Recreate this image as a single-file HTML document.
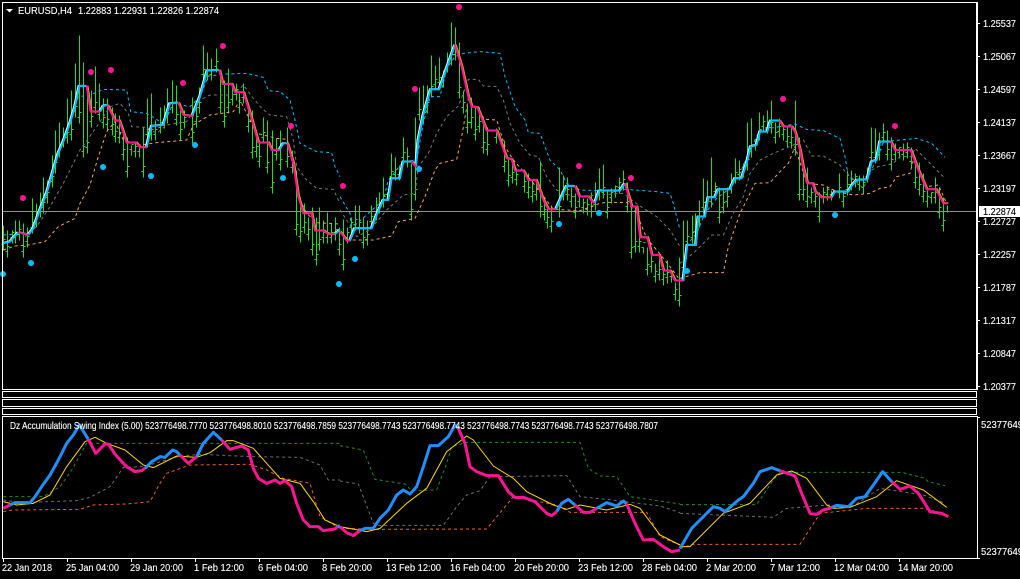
<!DOCTYPE html>
<html><head><meta charset="utf-8"><title>EURUSD,H4</title>
<style>
html,body{margin:0;padding:0;background:#000;width:1020px;height:579px;overflow:hidden}
svg{display:block;position:absolute;left:0;top:0}
text{font-family:"Liberation Sans",sans-serif;font-size:10.2px;fill:#fff;stroke:#fff;stroke-width:.12px}
defs path,.n{fill:none;vector-effect:non-scaling-stroke;stroke-linejoin:round}
.p{stroke:#ff1493;stroke-width:2}.b{stroke:#00bfff;stroke-width:2}
.p3{stroke:#ff1493;stroke-width:3}.b3{stroke:#1e90ff;stroke-width:3}
.w{stroke:#fff;stroke-width:1.6}.o{stroke:#daa520;stroke-width:1.6}
.db{stroke:#00bfff;stroke-dasharray:3 3}.dg{stroke:#777;stroke-dasharray:3 3}.dr{stroke:#f4a460;stroke-dasharray:3 3}
.y{stroke:#ffd700;stroke-width:1}.g2{stroke:#228b22;stroke-dasharray:3 3}.g3{stroke:#6e6e6e;stroke-dasharray:3 3}.r3{stroke:#e8641e;stroke-dasharray:3 3}
</style></head><body>
<svg width="1020" height="579" viewBox="0 0 1020 579" xmlns="http://www.w3.org/2000/svg">
<rect width="1020" height="579" fill="#000"/>
<!-- price line -->
<rect x="3" y="211" width="974" height="1" fill="#8f8f8f"/>
<!-- bars -->
<g transform="translate(.5,.5)" shape-rendering="crispEdges"><path fill="none" stroke="#1fdf1f" stroke-width="1" d="M3 225V250m-2-6h2m0-5h2M7 230V257m-2-6h2m0-5h2M12 230V243m-2-6h2m0-5h2M15 220V243m-2-6h2m0-5h2M19 220V240m-2-6h2m0-5h2M23 223V257m-2-6h2m0-5h2M27 227V247m-2-6h2m0-5h2M32 198V233m-2-6h2m0-5h2M36 203V227m-2-6h2m0-5h2M40 192V217m-2-6h2m0-5h2M43 177V213m-2-6h2m0-5h2M47 180V203m-2-6h2m0-5h2M52 155V187m-2-6h2m0-5h2M55 130V173m-2-6h2m0-5h2M59 122V157m-2-6h2m0-5h2M63 127V147m-2-6h2m0-5h2M67 98V143m-2-6h2m0-5h2M71 90V140m-2-6h2m0-5h2M75 63V117m-2-6h2m0-5h2M79 35V123m-2-6h2m0-5h2M83 62V157m-2-6h2m0-5h2M87 87V153m-2-6h2m0-5h2M91 90V127m-2-6h2m0-5h2M95 66V113m-2-6h2m0-5h2M99 83V120m-2-6h2m0-5h2M103 98V128m-2-6h2m0-5h2M107 98V130m-2-6h2m0-5h2M112 107V135m-2-6h2m0-5h2M115 113V142m-2-6h2m0-5h2M119 115V143m-2-6h2m0-5h2M123 127V160m-2-6h2m0-5h2M127 137V177m-2-6h2m0-5h2M131 145V155m-2-6h2m0-5h2M135 143V157m-2-6h2m0-5h2M139 147V157m-2-6h2m0-5h2M143 127V177m-2-6h2m0-5h2M147 98V140m-2-6h2m0-5h2M151 93V140m-2-6h2m0-5h2M155 120V140m-2-6h2m0-5h2M160 107V133m-2-6h2m0-5h2M164 105V128m-2-6h2m0-5h2M167 88V123m-2-6h2m0-5h2M172 80V113m-2-6h2m0-5h2M176 85V125m-2-6h2m0-5h2M180 110V140m-2-6h2m0-5h2M184 110V128m-2-6h2m0-5h2M192 97V143m-2-6h2m0-5h2M196 100V127m-2-6h2m0-5h2M199 87V113m-2-6h2m0-5h2M203 45V80m-2-6h2m0-5h2M207 52V80m-2-6h2m0-5h2M211 58V80m-2-6h2m0-5h2M216 48V72m-2-6h2m0-5h2M220 70V113m-2-6h2m0-5h2M224 80V127m-2-6h2m0-5h2M228 68V113m-2-6h2m0-5h2M232 83V105m-2-6h2m0-5h2M236 83V100m-2-6h2m0-5h2M239 93V113m-2-6h2m0-5h2M243 83V103m-2-6h2m0-5h2M248 103V132m-2-6h2m0-5h2M252 110V158m-2-6h2m0-5h2M256 132V157m-2-6h2m0-5h2M259 140V167m-2-6h2m0-5h2M263 117V143m-2-6h2m0-5h2M267 120V173m-2-6h2m0-5h2M272 130V193m-2-6h2m0-5h2M276 138V160m-2-6h2m0-5h2M280 130V170m-2-6h2m0-5h2M287 127V167m-2-6h2m0-5h2M292 150V173m-2-6h2m0-5h2M296 170V235m-2-6h2m0-5h2M300 197V242m-2-6h2m0-5h2M304 203V233m-2-6h2m0-5h2M308 217V240m-2-6h2m0-5h2M312 207V255m-2-6h2m0-5h2M316 217V265m-2-6h2m0-5h2M319 207V250m-2-6h2m0-5h2M323 220V243m-2-6h2m0-5h2M327 212V243m-2-6h2m0-5h2M331 223V243m-2-6h2m0-5h2M335 217V240m-2-6h2m0-5h2M339 227V255m-2-6h2m0-5h2M343 219V270m-2-6h2m0-5h2M347 227V243m-2-6h2m0-5h2M351 217V233m-2-6h2m0-5h2M355 205V230m-2-6h2m0-5h2M359 205V233m-2-6h2m0-5h2M363 217V248m-2-6h2m0-5h2M367 220V245m-2-6h2m0-5h2M371 205V227m-2-6h2m0-5h2M376 197V220m-2-6h2m0-5h2M379 192V213m-2-6h2m0-5h2M383 177V207m-2-6h2m0-5h2M387 192V200m-2-6h2m0-5h2M391 153V182m-2-6h2m0-5h2M395 157V180m-2-6h2m0-5h2M399 165V180m-2-6h2m0-5h2M403 137V163m-2-6h2m0-5h2M407 147V167m-2-6h2m0-5h2M411 163V220m-2-6h2m0-5h2M415 117V200m-2-6h2m0-5h2M419 87V120m-2-6h2m0-5h2M423 85V123m-2-6h2m0-5h2M427 85V113m-2-6h2m0-5h2M431 55V97m-2-6h2m0-5h2M435 65V90m-2-6h2m0-5h2M439 57V88m-2-6h2m0-5h2M443 70V87m-2-6h2m0-5h2M447 52V72m-2-6h2m0-5h2M451 22V65m-2-6h2m0-5h2M455 27V60m-2-6h2m0-5h2M459 42V98m-2-6h2m0-5h2M463 90V113m-2-6h2m0-5h2M467 105V133m-2-6h2m0-5h2M471 97V128m-2-6h2m0-5h2M475 107V140m-2-6h2m0-5h2M479 107V132m-2-6h2m0-5h2M483 123V153m-2-6h2m0-5h2M487 127V155m-2-6h2m0-5h2M496 128V143m-2-6h2m0-5h2M504 140V172m-2-6h2m0-5h2M508 157V186m-2-6h2m0-5h2M512 160V183m-2-6h2m0-5h2M516 168V185m-2-6h2m0-5h2M524 173V192m-2-6h2m0-5h2M528 173V198m-2-6h2m0-5h2M532 180V202m-2-6h2m0-5h2M536 180V200m-2-6h2m0-5h2M540 161V217m-2-6h2m0-5h2M544 197V220m-2-6h2m0-5h2M547 208V228m-2-6h2m0-5h2M551 205V232m-2-6h2m0-5h2M559 167V217m-2-6h2m0-5h2M563 175V200m-2-6h2m0-5h2M567 177V200m-2-6h2m0-5h2M571 187V207m-2-6h2m0-5h2M575 193V218m-2-6h2m0-5h2M579 193V207m-2-6h2m0-5h2M583 198V213m-2-6h2m0-5h2M587 198V215m-2-6h2m0-5h2M591 192V217m-2-6h2m0-5h2M595 182V210m-2-6h2m0-5h2M599 168V200m-2-6h2m0-5h2M603 164V198m-2-6h2m0-5h2M607 190V218m-2-6h2m0-5h2M611 188V203m-2-6h2m0-5h2M615 185V197m-2-6h2m0-5h2M619 177V193m-2-6h2m0-5h2M623 170V190m-2-6h2m0-5h2M627 182V212m-2-6h2m0-5h2M631 200V258m-2-6h2m0-5h2M635 207V252m-2-6h2m0-5h2M639 235V252m-2-6h2m0-5h2M643 247V253m-2-6h2m0-5h2M647 247V275m-2-6h2m0-5h2M651 255V272m-2-6h2m0-5h2M655 263V282m-2-6h2m0-5h2M659 257V280m-2-6h2m0-5h2M663 267V285m-2-6h2m0-5h2M667 260V283m-2-6h2m0-5h2M671 270V282m-2-6h2m0-5h2M675 282V300m-2-6h2m0-5h2M679 257V306m-2-6h2m0-5h2M683 220V273m-2-6h2m0-5h2M687 220V247m-2-6h2m0-5h2M692 215V243m-2-6h2m0-5h2M695 213V237m-2-6h2m0-5h2M699 200V227m-2-6h2m0-5h2M703 178V213m-2-6h2m0-5h2M707 180V207m-2-6h2m0-5h2M711 157V207m-2-6h2m0-5h2M715 182V197m-2-6h2m0-5h2M719 187V223m-2-6h2m0-5h2M723 190V213m-2-6h2m0-5h2M727 187V207m-2-6h2m0-5h2M731 173V193m-2-6h2m0-5h2M735 158V183m-2-6h2m0-5h2M739 160V180m-2-6h2m0-5h2M743 163V177m-2-6h2m0-5h2M747 122V170m-2-6h2m0-5h2M751 118V157m-2-6h2m0-5h2M755 140V150m-2-6h2m0-5h2M759 112V140m-2-6h2m0-5h2M763 115V132m-2-6h2m0-5h2M767 110V133m-2-6h2m0-5h2M771 100V133m-2-6h2m0-5h2M775 122V143m-2-6h2m0-5h2M779 118V137m-2-6h2m0-5h2M783 125V140m-2-6h2m0-5h2M787 127V147m-2-6h2m0-5h2M791 128V148m-2-6h2m0-5h2M795 100V155m-2-6h2m0-5h2M799 137V200m-2-6h2m0-5h2M803 163V200m-2-6h2m0-5h2M807 167V207m-2-6h2m0-5h2M811 187V203m-2-6h2m0-5h2M815 187V207m-2-6h2m0-5h2M819 192V222m-2-6h2m0-5h2M823 187V203m-2-6h2m0-5h2M827 187V200m-2-6h2m0-5h2M831 190V200m-2-6h2m0-5h2M839 173V198m-2-6h2m0-5h2M843 190V207m-2-6h2m0-5h2M847 170V195m-2-6h2m0-5h2M851 170V190m-2-6h2m0-5h2M855 173V187m-2-6h2m0-5h2M859 175V190m-2-6h2m0-5h2M863 175V193m-2-6h2m0-5h2M867 167V182m-2-6h2m0-5h2M871 127V163m-2-6h2m0-5h2M875 128V163m-2-6h2m0-5h2M879 132V160m-2-6h2m0-5h2M883 123V143m-2-6h2m0-5h2M887 130V160m-2-6h2m0-5h2M891 137V170m-2-6h2m0-5h2M895 143V160m-2-6h2m0-5h2M899 147V158m-2-6h2m0-5h2M903 143V160m-2-6h2m0-5h2M907 142V158m-2-6h2m0-5h2M911 147V167m-2-6h2m0-5h2M915 157V188m-2-6h2m0-5h2M919 162V195m-2-6h2m0-5h2M923 173V202m-2-6h2m0-5h2M927 190V207m-2-6h2m0-5h2M931 192V203m-2-6h2m0-5h2M935 177V203m-2-6h2m0-5h2M939 187V218m-2-6h2m0-5h2M943 197V231m-2-6h2m0-5h2M947 205V212"/></g>
<defs>
<path id="b1" vector-effect="non-scaling-stroke" d="M9 730L30 725 55 697M85 705L100 685 120 630 140 580 160 510 175 460 190 425 210 370 225 320 238 258 260 258M300 335L310 318 322 315M440 442L455 378 490 375 510 310 535 308M578 345L600 290 622 212 658 210M838 450L850 430 862 430M1005 702L1020 690"/>
<path id="p1" vector-effect="non-scaling-stroke" d="M55 697L85 705M260 258L272 335 300 335M322 315L345 362 358 362 380 428 408 428 420 442 440 442M535 308L550 345 578 348M658 210L668 252 695 252 705 277 730 277 750 340 775 428 805 428 815 450 838 450M862 430L880 490 895 590 910 640 935 640 945 692 970 692 985 702 1005 702"/>
<path id="b2" vector-effect="non-scaling-stroke" d="M30 722L45 685 95 685 110 645 130 600 145 600 155 535 180 535 190 485 215 485M228 500L235 420 250 345 272 268 298 268 308 240 320 205 345 135M648 628L665 590 680 558 705 558M765 608L778 572 840 572 855 550"/>
<path id="p2" vector-effect="non-scaling-stroke" d="M0 695L20 722 30 722M215 485L228 500M345 135L365 200 385 290 395 320 412 322 440 392 470 392 500 475 515 478 525 512 550 512 565 540 588 540 610 600 625 628 648 628M705 558L718 590 745 590 760 608 765 608M855 550L875 620 890 620 900 712 922 712 935 765 958 765 970 812 990 812 1005 842 1020 842"/>
<path id="b3" vector-effect="non-scaling-stroke" d="M10 842L22 735 48 735 55 650 75 650 85 592 105 592 115 568 150 568 165 535 185 535 200 490 212 440 230 435 240 395 262 395 272 362 298 362M455 592L465 575 505 575 515 558 530 540 562 538 575 485 590 480 600 425 632 425"/>
<path id="p3" vector-effect="non-scaling-stroke" d="M0 842L10 842M298 362L310 380 335 380 345 395 360 450 370 505 382 550 398 550 405 575 425 592 455 592M632 425L645 450 692 450 715 510 740 568 768 568 790 610 802 610"/>
</defs>
<!-- main chart tile 1 -->
<g transform="scale(.33333)">
<path class="n db" d="M10 705L85 700 100 675 130 590 160 520 180 440 215 350 235 290 270 285 310 268 380 270 392 335 440 340 465 355 490 372 520 310 570 320 600 290 625 228 680 222 740 220 790 232 805 272 840 275 870 300 885 360 900 430 950 455 995 458 1005 500 1020 530"/>
<path class="n dg" d="M75 710L110 680 150 620 190 550 240 450 290 380 330 320 360 310 385 340 395 380 440 382 470 400 500 375 560 365 600 300 630 285 700 285 730 255 760 295 785 325 810 345 860 350 880 420 890 500 920 540 950 565 1000 568 1020 610"/>
<path class="n dr" d="M10 750L45 738 85 735 135 725 175 680 225 655 240 610 270 555 295 470 320 395 345 365 370 420 420 435 470 428 560 420 580 375 630 345 700 335 720 300 770 400 830 415 862 418 900 600 920 640 950 668 1020 672"/>
<use href="#b1" class="w" transform="translate(-3,-1)"/><use href="#p1" class="o" transform="translate(3,-1)"/>
<use href="#b1" class="b"/><use href="#p1" class="p"/>
</g>
<g transform="translate(340,0) scale(.33333)">
<path class="n db" d="M0 590L30 640 35 700 40 680 130 600 145 540 190 485 230 480 250 370 270 290 300 290 320 205 345 170 370 160 420 155 480 160 495 230 525 320 555 360 565 398 600 400 630 480 660 510 680 550 720 570 780 572 860 568 950 575 990 580 1000 610 1020 690"/>
<path class="n dg" d="M0 630L20 660 50 710 90 690 140 630 190 585 225 580 235 500 265 460 290 400 320 350 355 318 370 280 385 238 415 238 430 258 470 260 490 300 510 370 540 430 570 465 595 470 620 530 650 570 700 590 850 580 895 615 950 650 990 690 1020 740"/>
<path class="n dr" d="M20 720L100 720 155 708 175 665 225 655 255 590 285 510 300 490 350 478 365 410 385 295 420 340 435 358 470 360 495 440 520 480 560 525 600 575 640 628 720 632 780 610 800 607 860 607 890 640 920 715 950 750 990 800 1020 840"/>
<use href="#b2" class="w" transform="translate(-3,-1)"/><use href="#p2" class="o" transform="translate(3,-1)"/>
<use href="#b2" class="b"/><use href="#p2" class="p"/>
</g>
<g transform="translate(680,0) scale(.33333)">
<path class="n db" d="M10 790L20 735 50 700 75 640 110 595 150 565 180 520 210 450 240 390 345 372 380 388 430 392 480 415 495 470 505 530 530 545 560 535 590 480 610 425 710 415 755 430 795 472"/>
<path class="n dg" d="M0 790L40 760 95 705 130 705 160 640 190 590 210 520 240 480 280 460 340 435 370 420 395 468 430 468 480 495 500 520 550 565 575 510 595 500 640 490 660 470 695 470 705 445 750 490 790 530"/>
<path class="n dr" d="M0 835L60 818 130 818 145 740 180 640 200 600 225 550 270 548 300 515 325 490 345 440 380 550 430 555 470 575 520 585 570 580 600 565 630 560 650 530 690 520 700 480 740 560 775 555 800 610"/>
<use href="#b3" class="w" transform="translate(-3,-1)"/><use href="#p3" class="o" transform="translate(3,-1)"/>
<use href="#b3" class="b"/><use href="#p3" class="p"/>
</g>
<!-- dots -->
<g fill="#ff1493"><circle cx="23" cy="198" r="3"/><circle cx="91" cy="72" r="3"/><circle cx="111" cy="70" r="3"/><circle cx="183" cy="83" r="3"/><circle cx="223" cy="46" r="3"/><circle cx="291" cy="126" r="3"/><circle cx="343" cy="186" r="3"/><circle cx="415" cy="89" r="3"/><circle cx="459" cy="7" r="3"/><circle cx="579" cy="166" r="3"/><circle cx="631" cy="178" r="3"/><circle cx="783" cy="99" r="3"/><circle cx="895" cy="126" r="3"/></g>
<g fill="#00bfff"><circle cx="3" cy="274" r="3"/><circle cx="31" cy="263" r="3"/><circle cx="103" cy="167" r="3"/><circle cx="151" cy="176" r="3"/><circle cx="195" cy="145" r="3"/><circle cx="283" cy="178" r="3"/><circle cx="339" cy="284" r="3"/><circle cx="355" cy="259" r="3"/><circle cx="419" cy="169" r="3"/><circle cx="559" cy="224" r="3"/><circle cx="599" cy="213" r="3"/><circle cx="687" cy="271" r="3"/><circle cx="835" cy="215" r="3"/></g>
<!-- indicator -->
<g transform="translate(0,380) scale(.33333)">
<path class="n g2" d="M10 350L130 350 180 320 215 270 260 190 1020 190"/>
<path class="n g3" d="M10 360L60 368 230 362 270 352 330 320 370 262 430 260 540 228 600 223 760 230 900 232 960 255 985 300 1020 300"/>
<path class="n r3" d="M10 395L40 390 240 388 280 375 380 372 450 365 480 310 500 280 570 255 750 253 800 270 850 295 930 310 960 410 1020 445"/>
<path class="n y" d="M10 365L50 375 100 370 150 345 200 260 255 185 285 172 320 190 375 210 430 255 460 263 530 228 590 232 630 218 680 182 700 182 760 205 800 250 840 295 900 310 940 365 975 420 1020 440"/>
<path class="n b3" d="M30 375L45 368 90 368 105 350 125 320 150 285 175 240 200 190 220 165 238 135 265 178M435 265L455 245 480 230 495 232 518 210 530 215 540 225M590 230L610 190 640 157 665 180M1012 440L1020 437"/>
<path class="n p3" d="M10 385L30 375M265 178L287 220 315 192 325 192 345 222 365 245 380 260 405 275 425 272 435 265M540 225L565 250 590 230M665 180L690 208 725 198 745 210 760 265 775 295 800 310 825 300 840 310 855 302 875 320 890 370 910 420 930 440 955 440 970 452 1005 447 1012 440"/>
</g>
<g transform="translate(340,380) scale(.33333)">
<path class="n g2" d="M0 197L70 210 105 298 195 312 215 332 290 330 320 250 335 200 380 187 720 187 745 265 780 288 830 290 870 350 1020 372"/>
<path class="n g3" d="M0 303L55 312 100 430 115 436 310 436 350 380 380 345 420 332 450 290 680 287 720 350 800 358 960 378 1020 398"/>
<path class="n r3" d="M0 445L110 448 440 447 520 350 650 375 690 397 920 397 960 470 1020 495"/>
<path class="n y" d="M0 440L80 455 120 445 200 370 260 325 320 215 380 168 400 180 460 258 520 295 560 335 640 375 680 388 720 375 800 390 870 373 900 385 960 465 1020 495"/>
<path class="n b3" d="M60 452L75 445 100 445 120 415 145 390 170 345 190 330 210 342 230 320 250 260 270 197 295 197 325 170 345 135 355 145M650 395L665 370 685 358 705 375M770 385L800 368 830 378 850 363 860 372"/>
<path class="n p3" d="M0 440L20 458 40 467 60 452M355 145L375 190 390 260 410 275 440 287 475 287 505 335 525 353 550 352 585 365 620 400 635 407 650 395M705 375L730 397 750 397 770 385M860 372L885 430 910 480 940 478 970 500 995 515 1020 510"/>
</g>
<g transform="translate(680,380) scale(.33333)">
<path class="n g2" d="M0 374L230 374 280 300 300 277 665 277 735 295 745 305 795 317"/>
<path class="n g3" d="M0 400L280 412 320 385 440 375 520 378 600 325 730 345 795 370"/>
<path class="n r3" d="M0 505L40 493 360 493 420 400 560 385 730 385 790 400"/>
<path class="n y" d="M0 500L30 500 130 400 210 370 290 285 335 273 380 295 440 375 460 385 510 382 590 350 650 302 730 330 800 382"/>
<path class="n b3" d="M0 505L35 445 60 420 100 380 120 385 135 395 175 360 190 350 220 310 240 275 275 263 300 272M455 383L470 376 505 380 530 355 555 350 580 315 608 275 635 305"/>
<path class="n p3" d="M300 272L345 288 365 340 390 400 410 403 430 390 455 383M635 305L660 328 690 318 715 340 750 395 785 400 805 410"/>
</g>
<!-- frames -->
<g fill="none" stroke="#fff" stroke-width="1" shape-rendering="crispEdges">
<path d="M2.5 389.5V2.5H976.5V389.5"/>
<rect x="2.5" y="391.5" width="974" height="6"/>
<rect x="2.5" y="399.5" width="974" height="7"/>
<rect x="2.5" y="408.5" width="974" height="6"/>
<path d="M2.5 558.5V416.5H977.5V558.5Z"/>
<path d="M2 389.5H977"/>
</g>
<rect x="976" y="2" width="2" height="388" fill="#fff"/>
<!-- price axis ticks -->
<g fill="#fff"><rect x="978" y="23" width="2" height="1"/><rect x="978" y="56" width="2" height="1"/><rect x="978" y="89" width="2" height="1"/><rect x="978" y="122" width="2" height="1"/><rect x="978" y="155" width="2" height="1"/><rect x="978" y="188" width="2" height="1"/><rect x="978" y="221" width="2" height="1"/><rect x="978" y="254" width="2" height="1"/><rect x="978" y="287" width="2" height="1"/><rect x="978" y="320" width="2" height="1"/><rect x="978" y="353" width="2" height="1"/><rect x="978" y="386" width="2" height="1"/><rect x="978" y="417" width="2" height="1"/><rect x="978" y="558" width="2" height="1"/></g>
<g fill="#fff"><rect x="3" y="559" width="1" height="3"/><rect x="67" y="559" width="1" height="3"/><rect x="131" y="559" width="1" height="3"/><rect x="195" y="559" width="1" height="3"/><rect x="259" y="559" width="1" height="3"/><rect x="323" y="559" width="1" height="3"/><rect x="387" y="559" width="1" height="3"/><rect x="451" y="559" width="1" height="3"/><rect x="515" y="559" width="1" height="3"/><rect x="579" y="559" width="1" height="3"/><rect x="643" y="559" width="1" height="3"/><rect x="707" y="559" width="1" height="3"/><rect x="771" y="559" width="1" height="3"/><rect x="835" y="559" width="1" height="3"/><rect x="899" y="559" width="1" height="3"/></g>
<!-- title -->
<path d="M6 9H13L9.5 12.5Z" fill="#fff"/>
<text x="18" y="14" textLength="54" lengthAdjust="spacingAndGlyphs">EURUSD,H4</text>
<text x="78" y="14" textLength="141" lengthAdjust="spacingAndGlyphs">1.22883 1.22931 1.22826 1.22874</text>
<!-- price labels -->
<g>
<text x="983" y="27" textLength="33" lengthAdjust="spacingAndGlyphs">1.25537</text>
<text x="983" y="60" textLength="33" lengthAdjust="spacingAndGlyphs">1.25067</text>
<text x="983" y="93" textLength="33" lengthAdjust="spacingAndGlyphs">1.24597</text>
<text x="983" y="126" textLength="33" lengthAdjust="spacingAndGlyphs">1.24137</text>
<text x="983" y="159" textLength="33" lengthAdjust="spacingAndGlyphs">1.23667</text>
<text x="983" y="192" textLength="33" lengthAdjust="spacingAndGlyphs">1.23197</text>
<text x="983" y="225" textLength="33" lengthAdjust="spacingAndGlyphs">1.22727</text>
<text x="983" y="258" textLength="33" lengthAdjust="spacingAndGlyphs">1.22257</text>
<text x="983" y="291" textLength="33" lengthAdjust="spacingAndGlyphs">1.21787</text>
<text x="983" y="324" textLength="33" lengthAdjust="spacingAndGlyphs">1.21317</text>
<text x="983" y="357" textLength="33" lengthAdjust="spacingAndGlyphs">1.20847</text>
<text x="983" y="390" textLength="33" lengthAdjust="spacingAndGlyphs">1.20377</text>
</g>
<rect x="979" y="206" width="41" height="11" fill="#fff"/>
<text x="983" y="215" textLength="33" lengthAdjust="spacingAndGlyphs" style="fill:#000;stroke:#000">1.22874</text>
<text x="981" y="428" textLength="42" lengthAdjust="spacingAndGlyphs">52377649</text>
<text x="981" y="555" textLength="42" lengthAdjust="spacingAndGlyphs">52377649</text>
<!-- indicator label -->
<text x="10" y="429" textLength="648" lengthAdjust="spacingAndGlyphs">Dz Accumulation Swing Index (5.00) 523776498.7770 523776498.8010 523776498.7859 523776498.7743 523776498.7743 523776498.7743 523776498.7743 523776498.7807</text>
<!-- time labels -->
<g>
<text x="2" y="571" textLength="50" lengthAdjust="spacingAndGlyphs">22 Jan 2018</text>
<text x="66" y="571" textLength="53" lengthAdjust="spacingAndGlyphs">25 Jan 04:00</text>
<text x="130" y="571" textLength="53" lengthAdjust="spacingAndGlyphs">29 Jan 20:00</text>
<text x="194" y="571" textLength="50" lengthAdjust="spacingAndGlyphs">1 Feb 12:00</text>
<text x="258" y="571" textLength="50" lengthAdjust="spacingAndGlyphs">6 Feb 04:00</text>
<text x="322" y="571" textLength="50" lengthAdjust="spacingAndGlyphs">8 Feb 20:00</text>
<text x="386" y="571" textLength="55" lengthAdjust="spacingAndGlyphs">13 Feb 12:00</text>
<text x="450" y="571" textLength="55" lengthAdjust="spacingAndGlyphs">16 Feb 04:00</text>
<text x="514" y="571" textLength="55" lengthAdjust="spacingAndGlyphs">20 Feb 20:00</text>
<text x="578" y="571" textLength="55" lengthAdjust="spacingAndGlyphs">23 Feb 12:00</text>
<text x="642" y="571" textLength="55" lengthAdjust="spacingAndGlyphs">28 Feb 04:00</text>
<text x="706" y="571" textLength="50" lengthAdjust="spacingAndGlyphs">2 Mar 20:00</text>
<text x="770" y="571" textLength="50" lengthAdjust="spacingAndGlyphs">7 Mar 12:00</text>
<text x="834" y="571" textLength="55" lengthAdjust="spacingAndGlyphs">12 Mar 04:00</text>
<text x="898" y="571" textLength="55" lengthAdjust="spacingAndGlyphs">14 Mar 20:00</text>
</g>
</svg>
</body></html>
